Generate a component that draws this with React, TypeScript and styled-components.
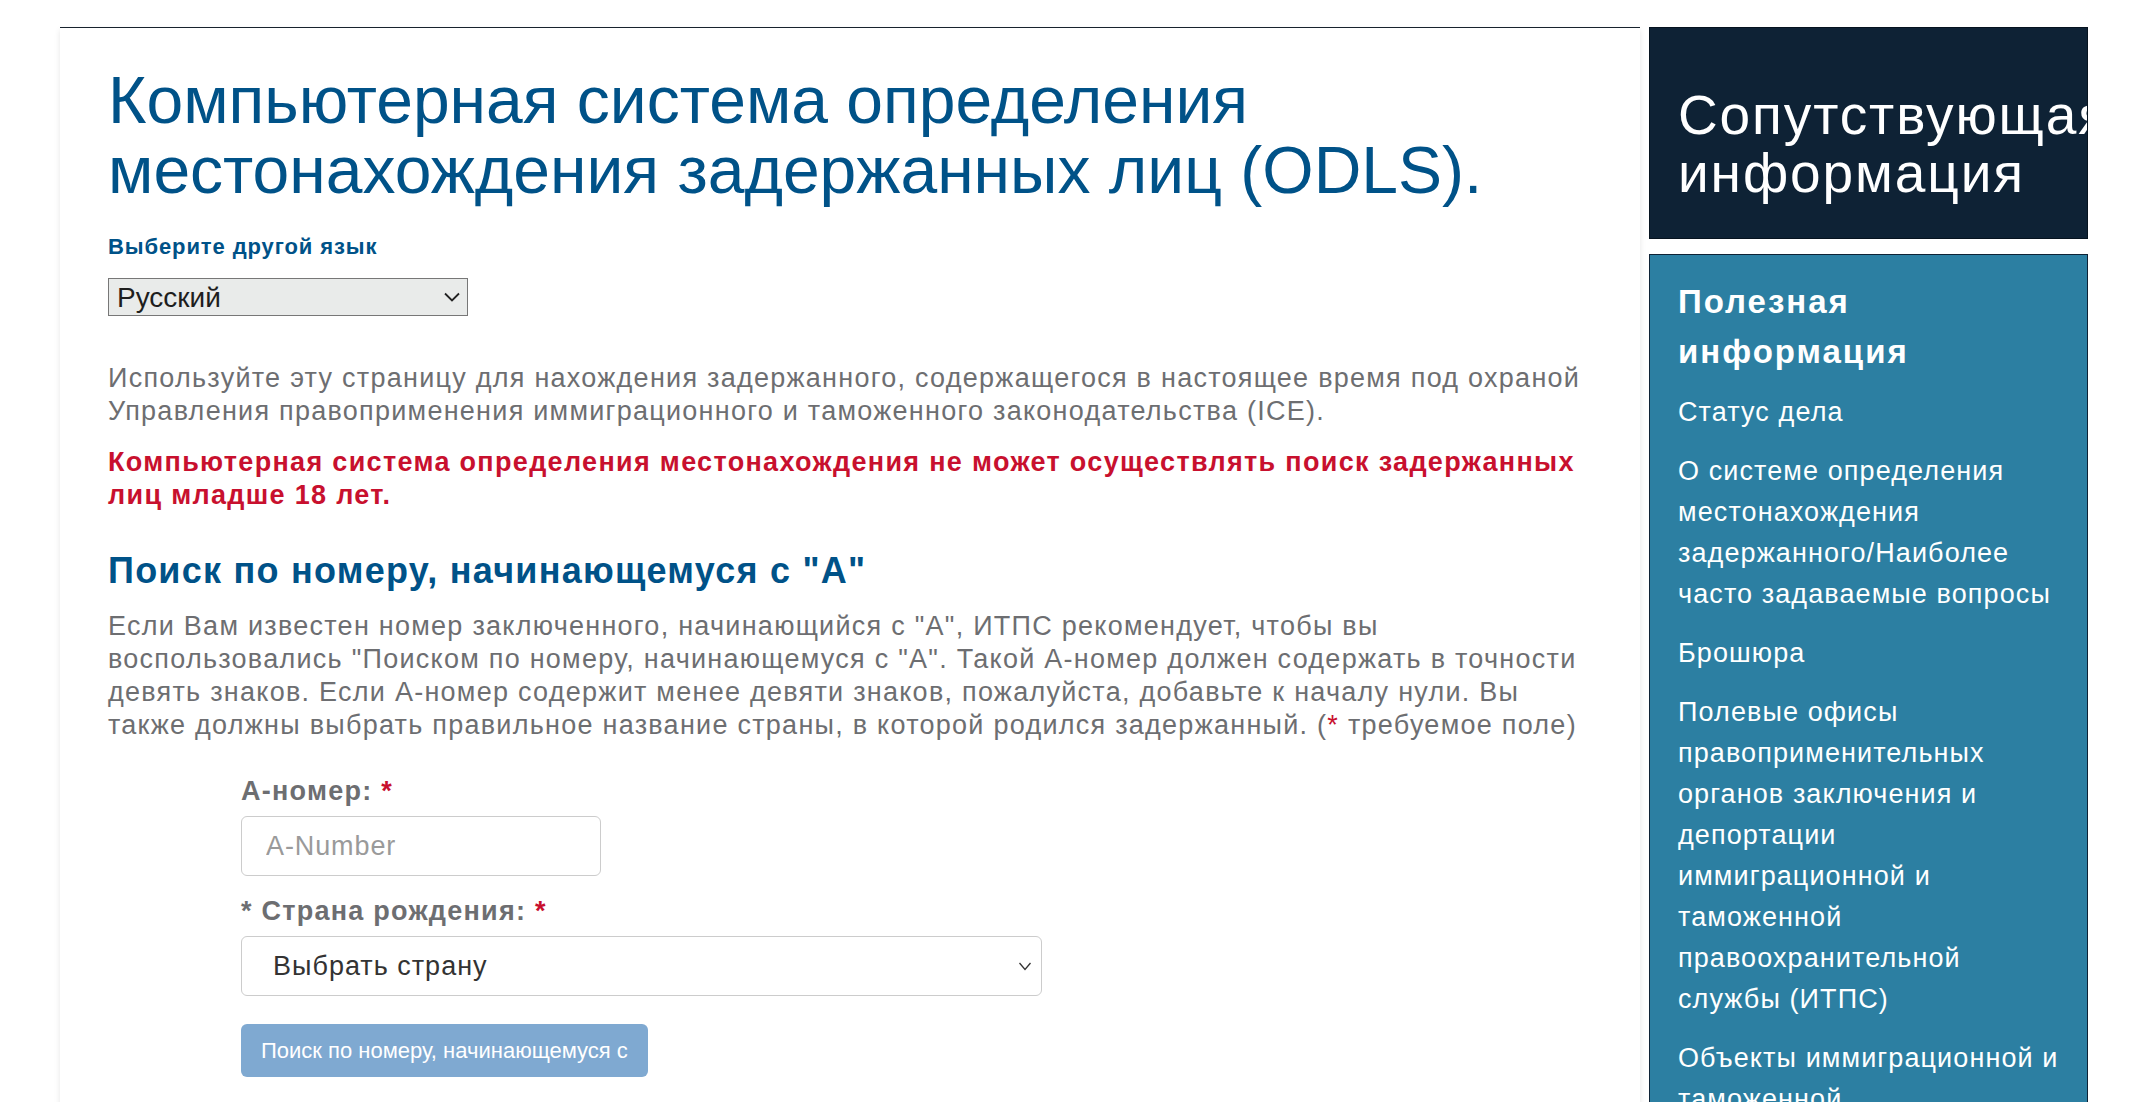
import React from "react";
import styled, { createGlobalStyle } from "styled-components";

const GlobalStyle = createGlobalStyle`
  html, body {
    margin: 0;
    padding: 0;
    background: #ffffff;
  }
  body {
    font-family: "Liberation Sans", Arial, Helvetica, sans-serif;
    overflow: hidden;
  }
  * { box-sizing: border-box; }
`;

const Page = styled.div`
  display: flex;
  align-items: flex-start;
  gap: 9px;
  padding: 27px 0 0 60px;
  height: 1102px;
  overflow: hidden;
`;

const Main = styled.main`
  width: 1580px;
  min-height: 1200px;
  border-top: 1px solid #18232e;
  box-shadow: 0 3px 6px rgba(0, 0, 0, 0.1);
  padding: 37px 30px 0 48px;
  flex-shrink: 0;
`;

const Title = styled.h1`
  margin: 0;
  font-size: 66px;
  line-height: 70px;
  font-weight: 400;
  color: #005288;
`;

const LangLabel = styled.label`
  display: block;
  margin-top: 29px;
  font-size: 22px;
  line-height: 26px;
  font-weight: 700;
  letter-spacing: 0.9px;
  color: #005288;
`;

const SelectWrap = styled.div<{ $w: number; $h: number }>`
  position: relative;
  width: ${(p) => p.$w}px;
  height: ${(p) => p.$h}px;
`;

const Chevron = styled.svg<{ $right: number }>`
  position: absolute;
  top: 50%;
  right: ${(p) => p.$right}px;
  transform: translateY(-50%);
  pointer-events: none;
`;

const LangSelect = styled.select`
  appearance: none;
  -webkit-appearance: none;
  width: 100%;
  height: 100%;
  margin: 0;
  padding: 0 0 0 8px;
  border: 1px solid #777777;
  border-radius: 0;
  background: #e9ebea;
  font-family: inherit;
  font-size: 28px;
  color: #1e1e1e;
`;

const LangBlock = styled.div`
  margin-top: 18px;
`;

const Text = styled.p`
  margin: 0;
  font-size: 27px;
  line-height: 33px;
  letter-spacing: 1.26px;
  color: #6d6e71;
`;

const Intro = styled(Text)`
  margin-top: 46px;
`;

const Warning = styled(Text)`
  margin-top: 18px;
  font-weight: 700;
  letter-spacing: 1.32px;
  color: #c8102e;
`;

const Heading = styled.h2`
  margin: 37px 0 0;
  font-size: 36px;
  line-height: 43px;
  font-weight: 700;
  letter-spacing: 1.25px;
  color: #005288;
`;

const Explain = styled(Text)`
  margin-top: 18px;
`;

const Req = styled.span`
  color: #c8102e;
`;

const Form = styled.form`
  margin: 33px 0 0 133px;
  display: flex;
  flex-direction: column;
  align-items: flex-start;
`;

const FieldLabel = styled.label<{ $gap: number }>`
  display: block;
  margin-top: ${(p) => p.$gap}px;
  font-size: 27px;
  line-height: 33px;
  font-weight: 700;
  letter-spacing: 1.25px;
  color: #6d6e71;
`;

const TextInput = styled.input`
  margin-top: 8px;
  width: 360px;
  height: 60px;
  padding: 0 24px;
  border: 1px solid #cccccc;
  border-radius: 6px;
  font-family: inherit;
  font-size: 27px;
  letter-spacing: 0.9px;
  color: #333333;
  outline: none;
  &::placeholder {
    color: #9a9a9a;
  }
`;

const CountryBlock = styled.div`
  margin-top: 8px;
`;

const CountrySelect = styled.select`
  appearance: none;
  -webkit-appearance: none;
  width: 100%;
  height: 100%;
  margin: 0;
  padding: 0 0 0 31px;
  border: 1px solid #cccccc;
  border-radius: 6px;
  background: #ffffff;
  font-family: inherit;
  font-size: 27px;
  letter-spacing: 1px;
  color: #333333;
`;

const SearchButton = styled.button`
  margin-top: 28px;
  width: 407px;
  height: 53px;
  padding: 0 20px;
  border: none;
  border-radius: 6px;
  background: #7fa9d1;
  color: #ffffff;
  font-family: inherit;
  font-size: 22px;
  white-space: nowrap;
  overflow: hidden;
  text-align: left;
`;

const Side = styled.aside`
  width: 439px;
  display: flex;
  flex-direction: column;
  gap: 15px;
  flex-shrink: 0;
`;

const RelatedBox = styled.section`
  height: 212px;
  overflow: hidden;
  background: #0e2235;
  border: 1px solid #06131f;
  padding: 58px 0 0 28px;
`;

const RelatedTitle = styled.h2`
  margin: 0;
  font-size: 55px;
  line-height: 58px;
  font-weight: 400;
  letter-spacing: 1.9px;
  color: #ffffff;
  white-space: nowrap;
`;

const InfoBox = styled.section`
  min-height: 900px;
  background: #2c7fa2;
  border: 1px solid #0e2235;
  padding: 22px 10px 0 28px;
`;

const InfoTitle = styled.h3`
  margin: 0;
  font-size: 33px;
  line-height: 50px;
  font-weight: 700;
  letter-spacing: 2px;
  color: #ffffff;
`;

const LinkList = styled.ul`
  list-style: none;
  margin: 15px 0 0;
  padding: 0;
  display: flex;
  flex-direction: column;
  gap: 18px;
`;

const LinkItem = styled.li`
  font-size: 27px;
  line-height: 41px;
  letter-spacing: 1.1px;
  color: #ffffff;
`;

const Lines = ({ lines }: { lines: string[] }) => (
  <>
    {lines.map((l, i) => (
      <React.Fragment key={i}>
        {i > 0 && <br />}
        {l}
      </React.Fragment>
    ))}
  </>
);

const links: string[][] = [
  ["Статус дела"],
  [
    "О системе определения",
    "местонахождения",
    "задержанного/Наиболее",
    "часто задаваемые вопросы",
  ],
  ["Брошюра"],
  [
    "Полевые офисы",
    "правоприменительных",
    "органов заключения и",
    "депортации",
    "иммиграционной и",
    "таможенной",
    "правоохранительной",
    "службы (ИТПС)",
  ],
  ["Объекты иммиграционной и", "таможенной", "правоохранительной службы"],
];

export default function App() {
  return (
    <>
      <GlobalStyle />
      <Page>
        <Main>
          <Title>
            Компьютерная система определения
            <br />
            местонахождения задержанных лиц (ODLS).
          </Title>

          <LangLabel htmlFor="lang">Выберите другой язык</LangLabel>
          <LangBlock>
            <SelectWrap $w={360} $h={38}>
              <LangSelect id="lang" defaultValue="ru">
                <option value="ru">Русский</option>
              </LangSelect>
              <Chevron $right={8} width="16" height="10" viewBox="0 0 16 10">
                <path d="M1 1.5 L8 8.5 L15 1.5" fill="none" stroke="#222" strokeWidth="1.8" />
              </Chevron>
            </SelectWrap>
          </LangBlock>

          <Intro>
            <Lines
              lines={[
                "Используйте эту страницу для нахождения задержанного, содержащегося в настоящее время под охраной",
                "Управления правоприменения иммиграционного и таможенного законодательства (ICE).",
              ]}
            />
          </Intro>

          <Warning>
            <Lines
              lines={[
                "Компьютерная система определения местонахождения не может осуществлять поиск задержанных",
                "лиц младше 18 лет.",
              ]}
            />
          </Warning>

          <Heading>Поиск по номеру, начинающемуся с "А"</Heading>

          <Explain>
            Если Вам известен номер заключенного, начинающийся с "А", ИТПС рекомендует, чтобы вы
            <br />
            воспользовались "Поиском по номеру, начинающемуся с "А". Такой А-номер должен содержать в точности
            <br />
            девять знаков. Если А-номер содержит менее девяти знаков, пожалуйста, добавьте к началу нули. Вы
            <br />
            также должны выбрать правильное название страны, в которой родился задержанный. (<Req>*</Req> требуемое поле)
          </Explain>

          <Form onSubmit={(e) => e.preventDefault()}>
            <FieldLabel $gap={0} htmlFor="anum">
              А-номер: <Req>*</Req>
            </FieldLabel>
            <TextInput id="anum" placeholder="A-Number" />

            <FieldLabel $gap={19} htmlFor="country">
              * Страна рождения: <Req>*</Req>
            </FieldLabel>
            <CountryBlock>
              <SelectWrap $w={801} $h={60}>
                <CountrySelect id="country" defaultValue="">
                  <option value="">Выбрать страну</option>
                </CountrySelect>
                <Chevron $right={10} width="14" height="10" viewBox="0 0 14 10">
                  <path d="M1.5 2 L7 8.5 L12.5 2" fill="none" stroke="#333" strokeWidth="1.3" />
                </Chevron>
              </SelectWrap>
            </CountryBlock>

            <SearchButton type="submit">Поиск по номеру, начинающемуся с</SearchButton>
          </Form>
        </Main>

        <Side>
          <RelatedBox>
            <RelatedTitle>
              Сопутствующая
              <br />
              информация
            </RelatedTitle>
          </RelatedBox>
          <InfoBox>
            <InfoTitle>
              Полезная
              <br />
              информация
            </InfoTitle>
            <LinkList>
              {links.map((l, i) => (
                <LinkItem key={i}>
                  <Lines lines={l} />
                </LinkItem>
              ))}
            </LinkList>
          </InfoBox>
        </Side>
      </Page>
    </>
  );
}
